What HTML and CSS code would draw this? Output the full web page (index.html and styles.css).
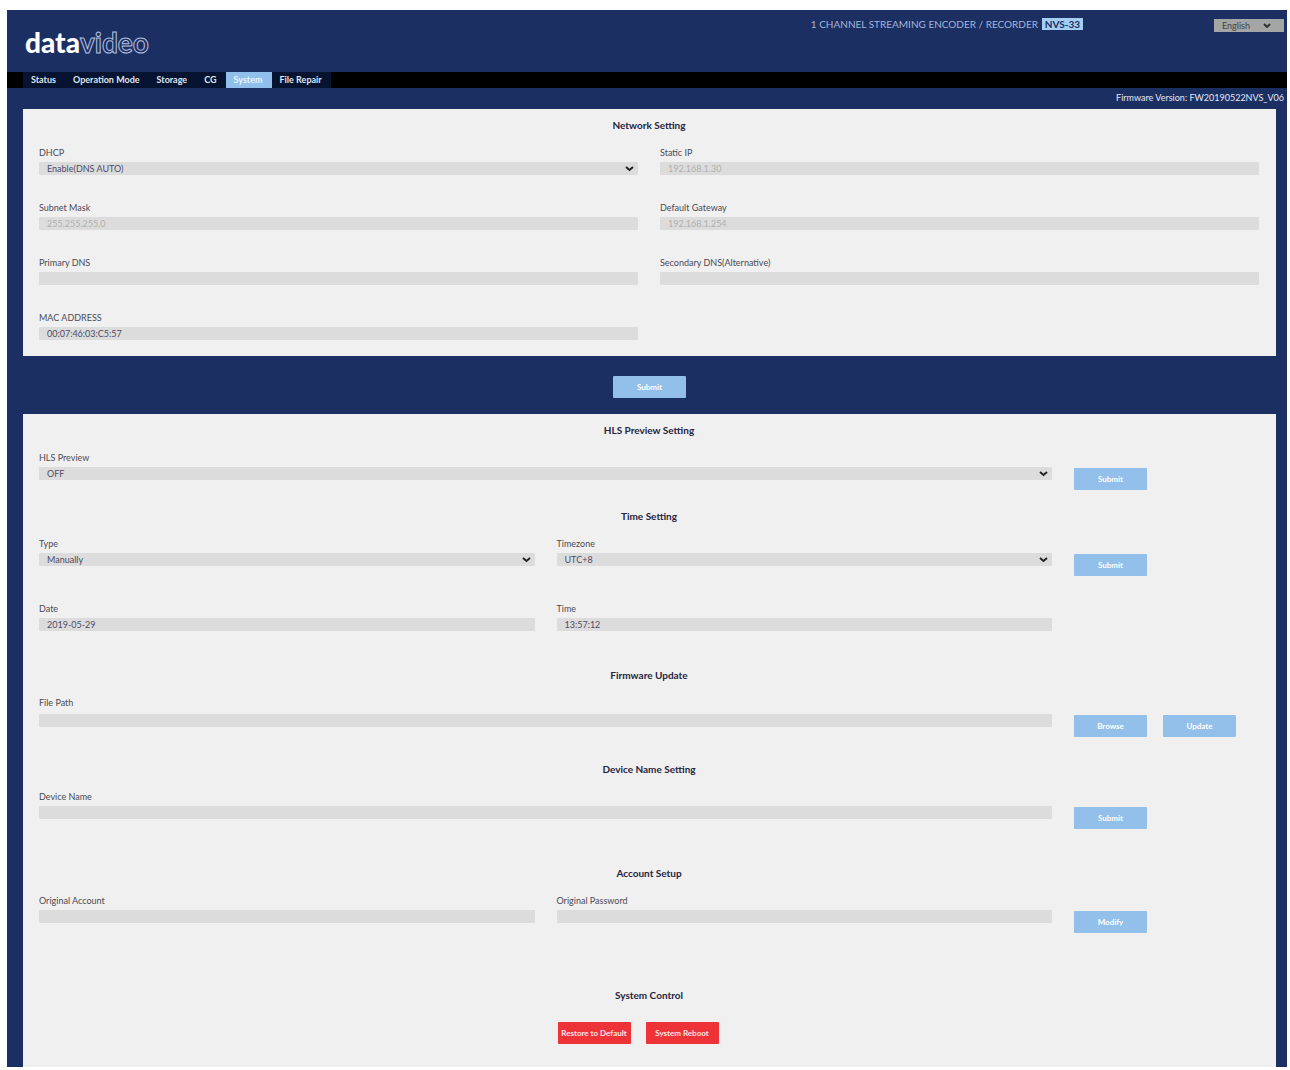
FILE: index.html
```html
<!DOCTYPE html>
<html lang="en">
<head>
<meta charset="utf-8">
<meta name="viewport" content="width=device-width, initial-scale=1">
<title>datavideo NVS-33 - System</title>
<link rel="stylesheet" href="styles.css">
</head>
<body>
<div class="app">
  <header class="header">
    <a class="logo" href="#"><span class="logo-solid">data</span><span class="logo-outline">video</span></a>
    <div class="product">
      <span>1 CHANNEL STREAMING ENCODER / RECORDER</span>
      <strong class="model">NVS-33</strong>
    </div>
    <select class="language" aria-label="Language"><option>English</option></select>
  </header>

  <nav class="nav">
    <a href="#">Status</a>
    <a href="#">Operation Mode</a>
    <a href="#">Storage</a>
    <a href="#">CG</a>
    <a href="#" class="active">System</a>
    <a href="#">File Repair</a>
  </nav>

  <p class="firmware">Firmware Version: FW20190522NVS_V06</p>

  <main>
    <form>
      <section class="panel network">
        <h2>Network Setting</h2>
        <div class="pair">
          <div class="field"><label for="dhcp">DHCP</label><select id="dhcp"><option>Enable(DNS AUTO)</option></select></div>
          <div class="field"><label for="ip">Static IP</label><input id="ip" type="text" value="192.168.1.30" disabled></div>
          <div class="field"><label for="mask">Subnet Mask</label><input id="mask" type="text" value="255.255.255.0" disabled></div>
          <div class="field"><label for="gateway">Default Gateway</label><input id="gateway" type="text" value="192.168.1.254" disabled></div>
          <div class="field"><label for="dns1">Primary DNS</label><input id="dns1" type="text"></div>
          <div class="field"><label for="dns2">Secondary DNS(Alternative)</label><input id="dns2" type="text"></div>
          <div class="field"><label for="mac">MAC ADDRESS</label><input id="mac" type="text" value="00:07:46:03:C5:57" readonly></div>
        </div>
      </section>
      <div class="submit-bar"><button type="button">Submit</button></div>
    </form>

    <div class="panel settings">
      <section class="group">
        <h2>HLS Preview Setting</h2>
        <div class="row">
          <div class="field"><label for="hls">HLS Preview</label><select id="hls"><option>OFF</option></select></div>
          <div class="actions"><button type="button">Submit</button></div>
        </div>
      </section>

      <section class="group group-wide">
        <h2>Time Setting</h2>
        <div class="row">
          <div class="pair">
            <div class="field"><label for="type">Type</label><select id="type"><option>Manually</option></select></div>
            <div class="field"><label for="zone">Timezone</label><select id="zone"><option>UTC+8</option></select></div>
          </div>
          <div class="actions"><button type="button">Submit</button></div>
          <div class="pair">
            <div class="field"><label for="date">Date</label><input id="date" type="text" value="2019-05-29"></div>
            <div class="field"><label for="time">Time</label><input id="time" type="text" value="13:57:12"></div>
          </div>
        </div>
      </section>

      <section class="group group-upload">
        <h2>Firmware Update</h2>
        <div class="row">
          <div class="field"><label for="path">File Path</label><input id="path" type="text"></div>
          <div class="actions"><button type="button">Browse</button><button type="button">Update</button></div>
        </div>
      </section>

      <section class="group group-wide">
        <h2>Device Name Setting</h2>
        <div class="row">
          <div class="field"><label for="name">Device Name</label><input id="name" type="text"></div>
          <div class="actions"><button type="button">Submit</button></div>
        </div>
      </section>

      <section class="group group-last">
        <h2>Account Setup</h2>
        <div class="row">
          <div class="pair">
            <div class="field"><label for="account">Original Account</label><input id="account" type="text"></div>
            <div class="field"><label for="password">Original Password</label><input id="password" type="password"></div>
          </div>
          <div class="actions"><button type="button">Modify</button></div>
        </div>
      </section>

      <section>
        <h2>System Control</h2>
        <div class="system">
          <button type="button" class="danger">Restore to Default</button>
          <button type="button" class="danger">System Reboot</button>
        </div>
      </section>
    </div>
  </main>
</div>
</body>
</html>
```
FILE: styles.css
```css
* {
  box-sizing: border-box;
}

body {
  margin: 10px 3px 3px 7px;
  background: #fff;
  color: #4a4a54;
  font: 9px/12px Lato, "Liberation Sans", sans-serif;
}

h2,
p {
  margin: 0;
}

a {
  color: inherit;
  text-decoration: none;
}

.app {
  background: #1b2f62;
}

/* Header */
.header {
  display: flex;
  align-items: flex-start;
  height: 62px;
  padding: 8px 3px 0 18px;
}

.logo {
  margin-right: auto;
  padding-top: 7px;
  font-size: 28px;
  line-height: 34px;
  color: #fff;
}

.logo-solid {
  font-weight: 900;
}

.logo-outline {
  font-weight: 700;
  color: #1b2f62;
  -webkit-text-stroke: 1px #b4c0e0;
}

.product {
  display: flex;
  gap: 4px;
  margin-right: 131px;
  color: #a3b5dc;
  font-size: 10px;
}

.model {
  min-width: 41px;
  background: #a4cdf2;
  color: #1b2f62;
  text-align: center;
}

.language {
  width: 70px;
  height: 13px;
  margin-top: 1px;
  padding: 0 8px;
  border: 0;
  border-radius: 0;
  appearance: none;
  background: #a3a6a5 url("data:image/svg+xml,%3Csvg xmlns='http://www.w3.org/2000/svg' width='8' height='5'%3E%3Cpath d='M1 1l3 3 3-3' fill='none' stroke='%23333' stroke-width='2'/%3E%3C/svg%3E") no-repeat right 13px center;
  color: #444;
  font: inherit;
}

/* Navigation */
.nav {
  display: flex;
  padding-left: 16px;
  background: #000;
  color: #dfe6f2;
  font-weight: 700;
  line-height: 16px;
}

.nav a {
  padding: 0 9px 0 8px;
  background: #071431;
}

.nav .active {
  background: #8fbfea;
  color: #e8f5ff;
}

.firmware {
  padding: 4px 3px 5px;
  color: #e4e9f5;
  text-align: right;
}

/* Panels */
.panel {
  margin: 0 11px 0 16px;
  padding: 8px 17px 16px 16px;
  background: #f0f0f0;
}

.settings {
  padding-bottom: 23px;
}

h2 {
  margin-bottom: 14px;
  color: #25243f;
  font-size: 10px;
  line-height: 16px;
  text-align: center;
}

.pair {
  display: grid;
  grid-template-columns: 1fr 1fr;
  gap: 27px 22px;
}

.row {
  display: grid;
  grid-template-columns: 1fr 185px;
  gap: 27px 22px;
}

.group {
  --label-gap: 3px;
  margin-bottom: 18px;
}

.group-wide {
  margin-bottom: 36px;
}

.group-upload {
  --label-gap: 5px;
  margin-bottom: 24px;
}

.group-last {
  margin-bottom: 54px;
}

.field label {
  display: block;
  margin-bottom: var(--label-gap, 3px);
}

.field input,
.field select {
  display: block;
  width: 100%;
  height: 13px;
  padding: 0 8px;
  border: 0;
  border-radius: 1px;
  appearance: none;
  background-color: #dcdcdc;
  color: #4c4b66;
  font: inherit;
  opacity: 1;
}

.field input:disabled {
  color: #b0b0b0;
}

.field select {
  background-image: url("data:image/svg+xml,%3Csvg xmlns='http://www.w3.org/2000/svg' width='9' height='6'%3E%3Cpath d='M1 1l3.500 3 3.500-3' fill='none' stroke='%23222' stroke-width='2'/%3E%3C/svg%3E");
  background-repeat: no-repeat;
  background-position: right 4px center;
}

/* Buttons */
button {
  width: 73px;
  height: 22px;
  padding: 0;
  border: 0;
  border-radius: 1px;
  background: #92c0ea;
  color: #fff;
  font: 700 8px/12px Lato, "Liberation Sans", sans-serif;
}

.actions {
  display: flex;
  gap: 16px;
  padding-top: calc(13px + var(--label-gap));
}

.submit-bar {
  display: flex;
  justify-content: center;
  padding: 20px 11px 16px 16px;
}

.system {
  display: flex;
  justify-content: center;
  gap: 15px;
  padding: 5px 22px 0 0;
}

.danger {
  background: #ee3338;
  color: #ffe4e4;
}
```
